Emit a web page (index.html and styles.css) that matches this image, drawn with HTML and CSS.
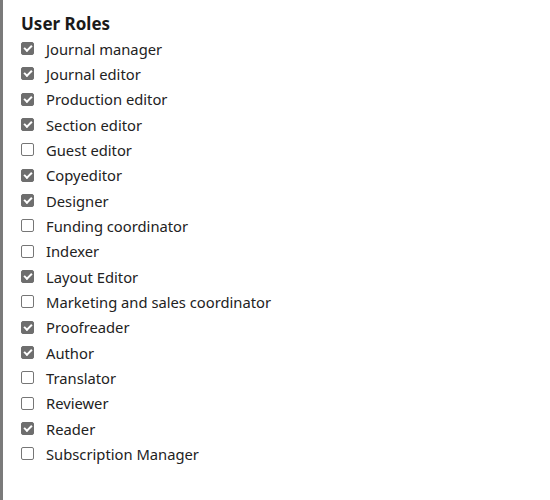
FILE: index.html
```html
<!DOCTYPE html>
<html lang="en">
<head>
<meta charset="utf-8">
<title>User Roles</title>
<link rel="stylesheet" href="styles.css">
</head>
<body>
<div class="panel">
  <fieldset class="roles">
    <legend class="title">User Roles</legend>
    <label class="role"><input type="checkbox" checked disabled><span>Journal manager</span></label>
    <label class="role"><input type="checkbox" checked disabled><span>Journal editor</span></label>
    <label class="role"><input type="checkbox" checked disabled><span>Production editor</span></label>
    <label class="role"><input type="checkbox" checked disabled><span>Section editor</span></label>
    <label class="role"><input type="checkbox" disabled><span>Guest editor</span></label>
    <label class="role"><input type="checkbox" checked disabled><span>Copyeditor</span></label>
    <label class="role"><input type="checkbox" checked disabled><span>Designer</span></label>
    <label class="role"><input type="checkbox" disabled><span>Funding coordinator</span></label>
    <label class="role"><input type="checkbox" disabled><span>Indexer</span></label>
    <label class="role"><input type="checkbox" checked disabled><span>Layout Editor</span></label>
    <label class="role"><input type="checkbox" disabled><span>Marketing and sales coordinator</span></label>
    <label class="role"><input type="checkbox" checked disabled><span>Proofreader</span></label>
    <label class="role"><input type="checkbox" checked disabled><span>Author</span></label>
    <label class="role"><input type="checkbox" disabled><span>Translator</span></label>
    <label class="role"><input type="checkbox" disabled><span>Reviewer</span></label>
    <label class="role"><input type="checkbox" checked disabled><span>Reader</span></label>
    <label class="role"><input type="checkbox" disabled><span>Subscription Manager</span></label>
  </fieldset>
</div>
</body>
</html>
```
FILE: styles.css
```css
html, body {
  margin: 0;
  padding: 0;
  background: #ffffff;
}
body {
  font-family: "Noto Sans", "Open Sans", sans-serif;
  color: #222222;
}
.panel {
  border-left: 3px solid #7a7a7a;
  min-height: 500px;
  box-sizing: border-box;
  padding: 13px 18px;
}
.roles {
  border: 0;
  margin: 0;
  padding: 0;
  display: flex;
  flex-direction: column;
}
.title {
  padding: 0;
  font-size: 17px;
  font-weight: 700;
  line-height: 22px;
  margin-bottom: 1px;
  color: #1a1a1a;
}
.role {
  display: flex;
  align-items: center;
  height: 25.33px;
  font-size: 14.75px;
}
.role input {
  appearance: none;
  width: 13px;
  height: 13px;
  margin: 0 12px 0 0;
  border: 1px solid #767676;
  border-radius: 2px;
  background: #fff;
  box-sizing: border-box;
  display: grid;
  place-items: center;
}
.role input:checked {
  background: #6e6e6e;
  border-color: #6e6e6e;
}
.role input:checked::after {
  content: "";
  width: 6px;
  height: 3px;
  border-left: 2px solid #fff;
  border-bottom: 2px solid #fff;
  transform: translateY(-1px) rotate(-45deg);
}
```
